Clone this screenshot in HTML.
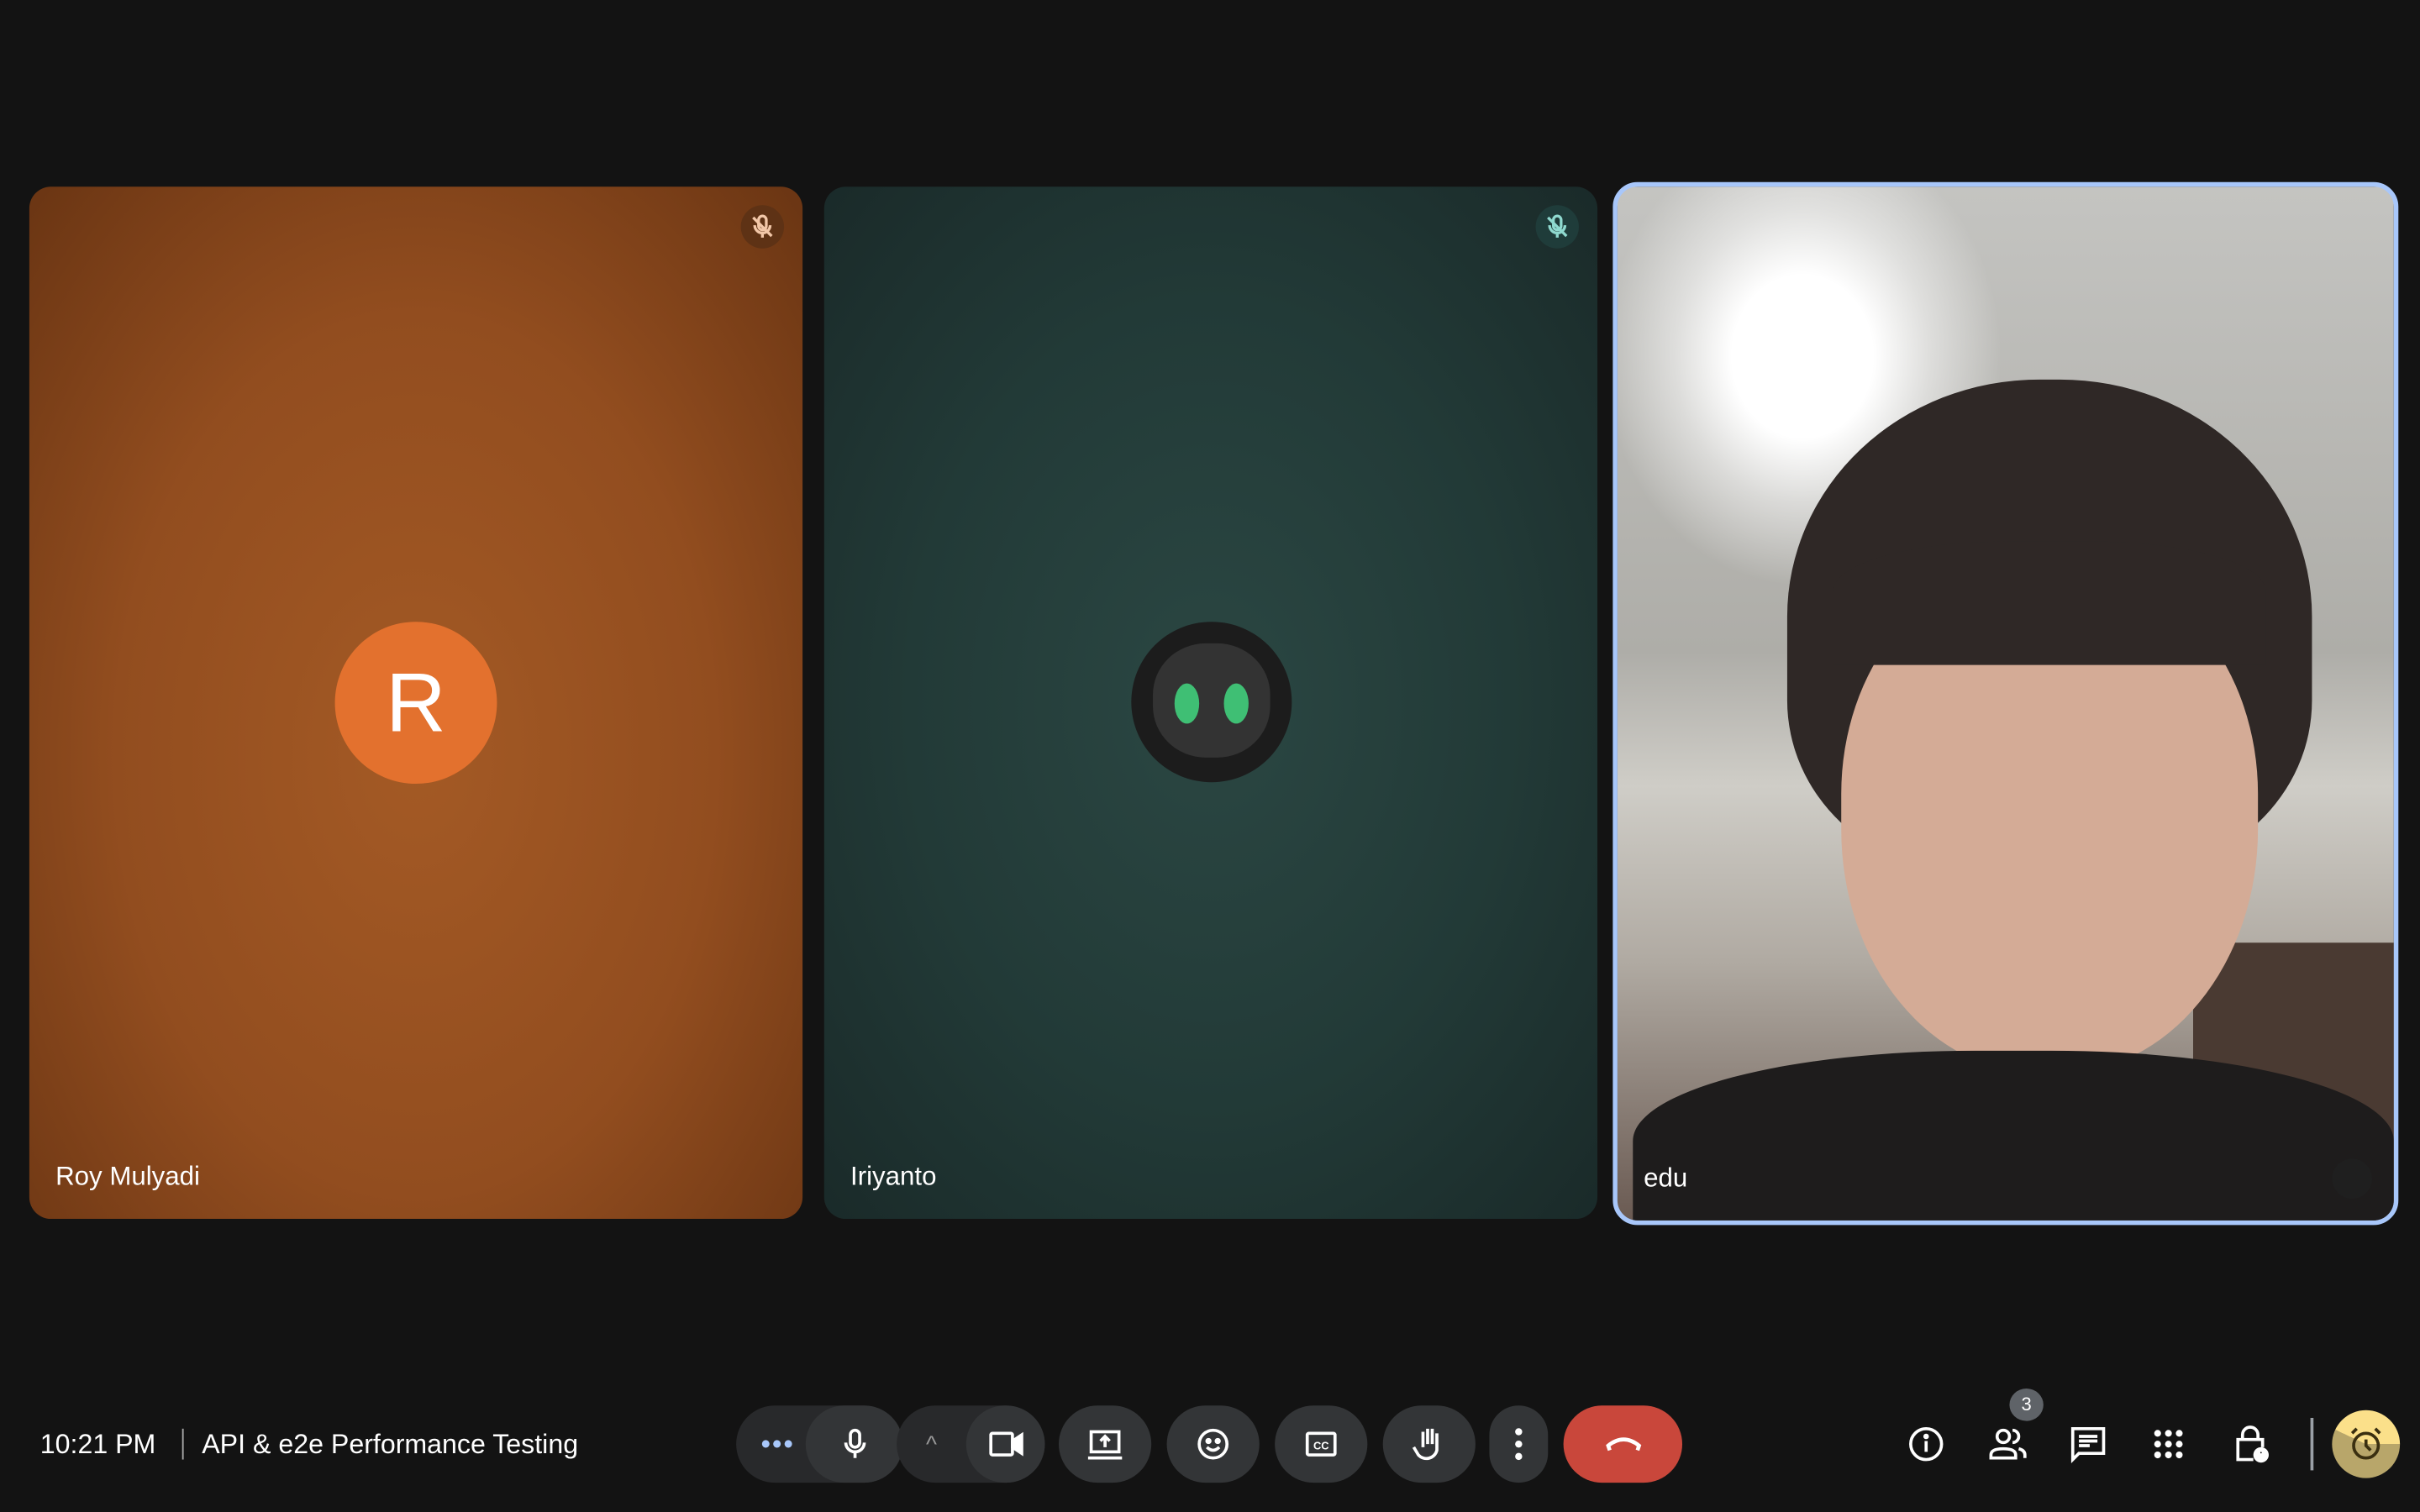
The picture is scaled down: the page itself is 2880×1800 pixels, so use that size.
<!DOCTYPE html>
<html><head><meta charset="utf-8"><style>
html,body{margin:0;padding:0;background:#131313;overflow:hidden}
#w{width:1568px;height:980px;position:relative;transform:scale(1.836735);transform-origin:0 0;font-family:"Liberation Sans",sans-serif;color:#e3e3e3}
.t{position:absolute;border-radius:14px;overflow:hidden}
.name{position:absolute;left:17px;bottom:17px;font-size:17px;color:#fff}
.mute{position:absolute;top:12px;right:12px;width:28px;height:28px;border-radius:50%}
.b{position:absolute;top:911px;height:50px;border-radius:25px;background:#333537;display:flex;align-items:center;justify-content:center}
.ri{position:absolute;top:922px;width:28px;height:28px}
</style></head><body><div id="w">
<div class="t" style="left:19px;top:121px;width:501px;height:669px;background:radial-gradient(ellipse at 50% 55%,#a45a25 0%,#924d1f 55%,#6a3513 100%)">
 <div class="mute" style="background:#5e3215"><svg width="28" height="28" viewBox="0 0 28 28" fill="none" stroke="#f2c7a8" stroke-width="1.8"><rect x="11.5" y="7" width="5" height="9" rx="2.5"/><path d="M9 13a5 5 0 0 0 10 0M14 18v3M8 8l12 12"/></svg></div>
 <div style="position:absolute;left:198px;top:282px;width:105px;height:105px;border-radius:50%;background:#e3712e;color:#fff;font-size:54px;display:flex;align-items:center;justify-content:center">R</div>
 <div class="name">Roy Mulyadi</div></div>
<div class="t" style="left:534px;top:121px;width:501px;height:669px;background:radial-gradient(ellipse at 50% 50%,#2b4743 0%,#223a37 55%,#1a2a29 100%)">
 <div class="mute" style="background:#1f3c3a"><svg width="28" height="28" viewBox="0 0 28 28" fill="none" stroke="#8fd9cf" stroke-width="1.8"><rect x="11.5" y="7" width="5" height="9" rx="2.5"/><path d="M9 13a5 5 0 0 0 10 0M14 18v3M8 8l12 12"/></svg></div>
 <div style="position:absolute;left:199px;top:282px;width:104px;height:104px;border-radius:50%;background:#1c1c1c;overflow:hidden">
  <div style="position:absolute;left:14px;top:14px;width:76px;height:74px;border-radius:45%;background:#333"></div>
  <div style="position:absolute;left:28px;top:40px;width:16px;height:26px;border-radius:50%;background:#3fbf74"></div>
  <div style="position:absolute;left:60px;top:40px;width:16px;height:26px;border-radius:50%;background:#3fbf74"></div>
 </div>
 <div class="name">Iriyanto</div></div>
<div class="t" style="left:1045px;top:118px;width:503px;height:670px;border:3px solid #a8c7fa;border-radius:16px;background:linear-gradient(180deg,#c4c4c1 0%,#aeada8 45%,#cfcdc7 58%,#b0aaa2 75%,#6a5a52 100%)">
 <div style="position:absolute;left:-10px;top:-40px;width:260px;height:300px;border-radius:50%;background:radial-gradient(#fff 25%,rgba(255,255,255,0.5) 45%,rgba(255,255,255,0) 70%)"></div>
 <div style="position:absolute;right:0;top:490px;width:130px;height:180px;background:#4a3a32"></div>
 <div style="position:absolute;left:110px;top:125px;width:340px;height:320px;border-radius:48% 48% 35% 35%;background:#2f2826"></div>
 <div style="position:absolute;left:145px;top:245px;width:270px;height:330px;border-radius:45% 45% 48% 48%;background:#d4ab96"></div>
 <div style="position:absolute;left:140px;top:230px;width:280px;height:80px;border-radius:40% 40% 0 0;background:#2f2826"></div>
 <div style="position:absolute;left:10px;top:560px;width:493px;height:130px;border-radius:45% 45% 0 0;background:#1e1c1c"></div>
 <div style="position:absolute;right:14px;bottom:14px;width:26px;height:26px;border-radius:50%;background:#1f1f1f"></div>
 <div class="name">edu</div></div>

<div style="position:absolute;left:26px;top:926px;font-size:17.5px;color:#fff">10:21 PM <span style="display:inline-block;width:1px;height:20px;background:#aaa;vertical-align:-4px;margin:0 12px"></span>API &amp; e2e Performance Testing</div>

<div class="b" style="left:477px;width:108px;background:#28292b;justify-content:flex-start"><span style="color:#a8c7fa;font-size:18px;margin-left:16px;letter-spacing:1px">•••</span></div>
<div class="b" style="left:522px;width:63px;background:#333537"><svg width="24" height="24" viewBox="0 0 24 24" fill="none" stroke="#fff" stroke-width="2"><rect x="9" y="3" width="6" height="11" rx="3"/><path d="M6 11a6 6 0 0 0 12 0M12 17v4"/></svg></div>
<div class="b" style="left:581px;width:96px;background:#28292b;justify-content:flex-start"><span style="color:#999;font-size:15px;margin-left:19px">^</span></div>
<div class="b" style="left:626px;width:51px"><svg width="26" height="24" viewBox="0 0 26 24" fill="none" stroke="#fff" stroke-width="2"><rect x="3" y="5" width="14" height="14" rx="1"/><path d="M17 10l6-4v12l-6-4z" fill="#fff"/></svg></div>
<div class="b" style="left:686px;width:60px"><svg width="26" height="24" viewBox="0 0 26 24" fill="none" stroke="#fff" stroke-width="2"><rect x="4" y="4" width="18" height="13"/><path d="M2 21h22M13 14V8M10 10l3-3 3 3"/></svg></div>
<div class="b" style="left:756px;width:60px"><svg width="24" height="24" viewBox="0 0 24 24" fill="none" stroke="#fff" stroke-width="2"><circle cx="12" cy="12" r="9"/><circle cx="9" cy="10" r="1" fill="#fff"/><circle cx="15" cy="10" r="1" fill="#fff"/><path d="M8 14q4 4 8 0"/></svg></div>
<div class="b" style="left:826px;width:60px"><svg width="24" height="24" viewBox="0 0 24 24" fill="none" stroke="#fff" stroke-width="2"><rect x="3" y="5" width="18" height="14" rx="1"/><text x="12" y="15.5" font-size="7" fill="#fff" stroke="none" text-anchor="middle" font-family="Liberation Sans" font-weight="bold">CC</text></svg></div>
<div class="b" style="left:896px;width:60px"><svg width="24" height="26" viewBox="0 0 24 26" fill="none" stroke="#fff" stroke-width="2"><path d="M8 15V5M11 13V3M14 13V3M17 14V6M17 14v3a7 7 0 0 1-12 3l-3-5"/></svg></div>
<div class="b" style="left:965px;width:38px"><svg width="6" height="22"><circle cx="3" cy="3" r="2.3" fill="#fff"/><circle cx="3" cy="11" r="2.3" fill="#fff"/><circle cx="3" cy="19" r="2.3" fill="#fff"/></svg></div>
<div class="b" style="left:1013px;width:77px;background:#c9473b"><svg width="28" height="16" viewBox="0 0 28 16" fill="none" stroke="#fff" stroke-width="2.5"><path d="M5 12l-1-3q10-8 20 0l-1 3"/></svg></div>

<svg class="ri" style="left:1234px" viewBox="0 0 28 28" fill="none" stroke="#fff" stroke-width="2"><circle cx="14" cy="14" r="10"/><path d="M14 12v7"/><circle cx="14" cy="9" r="0.8" fill="#fff"/></svg>
<div style="position:absolute;left:1302px;top:900px;width:22px;height:21px;border-radius:50%;background:#5f6368;color:#fff;font-size:12px;text-align:center;line-height:21px">3</div>
<svg class="ri" style="left:1287px" viewBox="0 0 28 28" fill="none" stroke="#fff" stroke-width="2"><circle cx="11" cy="9" r="4"/><path d="M3 23v-2q0-4 8-4t8 4v2zM17 5a4 4 0 0 1 0 8M21 17q4 1 4 4v2"/></svg>
<svg class="ri" style="left:1339px" viewBox="0 0 28 28" fill="none" stroke="#fff" stroke-width="2"><path d="M4 4h20v16H8l-4 4z"/><path d="M8 9h12M8 12h12M8 15h7"/></svg>
<svg class="ri" style="left:1391px" viewBox="0 0 28 28" fill="#fff"><circle cx="7" cy="7" r="2.2"/><circle cx="14" cy="7" r="2.2"/><circle cx="21" cy="7" r="2.2"/><circle cx="7" cy="14" r="2.2"/><circle cx="14" cy="14" r="2.2"/><circle cx="21" cy="14" r="2.2"/><circle cx="7" cy="21" r="2.2"/><circle cx="14" cy="21" r="2.2"/><circle cx="21" cy="21" r="2.2"/></svg>
<svg class="ri" style="left:1444px" viewBox="0 0 28 28" fill="none" stroke="#fff" stroke-width="2"><path d="M9 11V8a5 5 0 0 1 10 0v3M16 24H6V11h16v5"/><circle cx="21" cy="21" r="5" fill="#fff" stroke="none"/><circle cx="21" cy="19.5" r="1.5" fill="#131313"/></svg>
<div style="position:absolute;left:1497px;top:919px;width:2px;height:34px;background:#9aa0a6"></div>
<div style="position:absolute;left:1511px;top:914px;width:44px;height:44px;border-radius:50%;background:conic-gradient(#fbe08a 0 25%,#b8a66a 25% 82%,#fbe08a 82%);display:flex;align-items:center;justify-content:center"><svg width="26" height="26" viewBox="0 0 26 26" fill="none" stroke="#3a2f10" stroke-width="2"><circle cx="13" cy="14" r="8"/><path d="M13 10v4l3 3M4 6l3-3M22 6l-3-3"/></svg></div>
</div></body></html>
